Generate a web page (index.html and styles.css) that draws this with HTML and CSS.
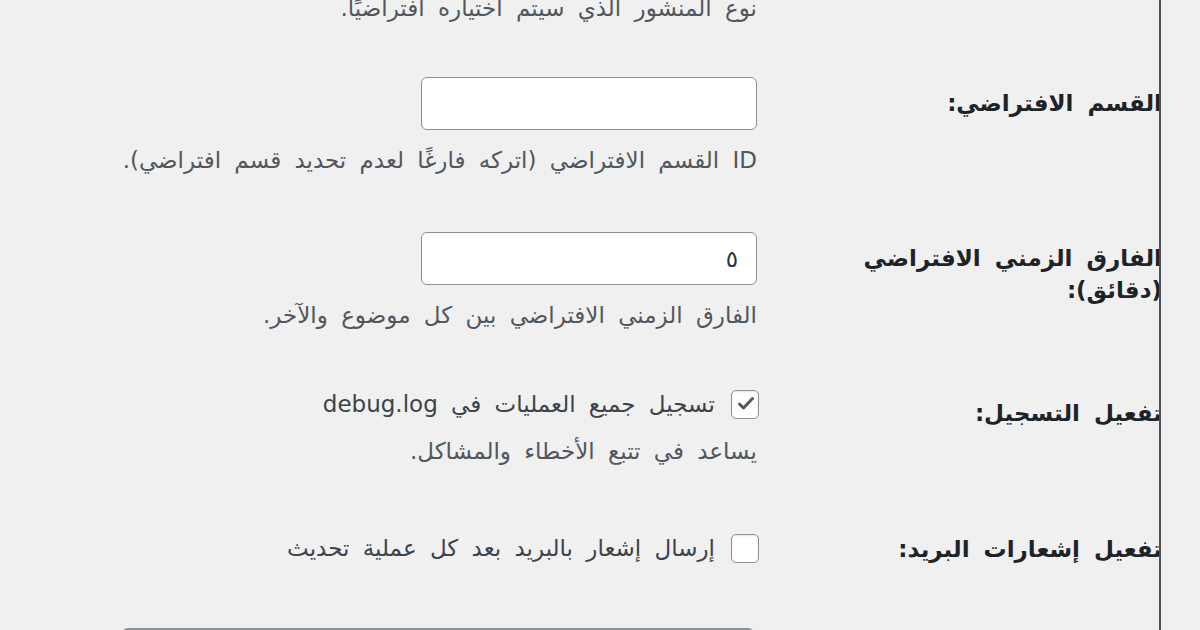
FILE: index.html
```html
<!DOCTYPE html>
<html lang="ar" dir="rtl">
<head>
  <meta charset="UTF-8" />
  <meta name="viewport" content="width=device-width, initial-scale=1.0"/>
  <title>الإعدادات</title>
  <link rel="stylesheet" href="styles.css">
</head>
<body>
  <div class="wrap">

    <!-- post type (tail of the previous row) -->
    <div class="row row-first">
      <div class="label"></div>
      <div class="field">
        <p class="description">نوع المنشور الذي سيتم اختياره افتراضيًا.</p>
      </div>
    </div>

    <!-- default category -->
    <div class="row">
      <label class="label" for="default-cat">القسم الافتراضي:</label>
      <div class="field">
        <input type="text" class="text-input" id="default-cat" value="" />
        <p class="description">ID القسم الافتراضي (اتركه فارغًا لعدم تحديد قسم افتراضي).</p>
      </div>
    </div>

    <!-- default interval -->
    <div class="row">
      <label class="label" for="default-gap">الفارق الزمني الافتراضي (دقائق):</label>
      <div class="field">
        <input type="text" class="text-input" id="default-gap" value="٥" />
        <p class="description">الفارق الزمني الافتراضي بين كل موضوع والآخر.</p>
      </div>
    </div>

    <!-- logging -->
    <div class="row">
      <div class="label">تفعيل التسجيل:</div>
      <div class="field">
        <label class="check-line">
          <span class="checkbox">
            <svg width="28" height="29" viewBox="0 0 28 29"><path d="M7.5 15l4 4L20.5 9.5" fill="none" stroke="#50575e" stroke-width="3" stroke-linecap="round" stroke-linejoin="round"/></svg>
          </span>
          <span>تسجيل جميع العمليات في debug.log</span>
        </label>
        <p class="description">يساعد في تتبع الأخطاء والمشاكل.</p>
      </div>
    </div>

    <!-- mail notifications -->
    <div class="row">
      <div class="label">تفعيل إشعارات البريد:</div>
      <div class="field field-mail">
        <label class="check-line">
          <span class="checkbox"></span>
          <span>إرسال إشعار بالبريد بعد كل عملية تحديث</span>
        </label>
      </div>
    </div>

    <!-- next row, mostly below the fold -->
    <div class="row">
      <div class="label"></div>
      <div class="field field-last">
        <div class="wide-box"></div>
      </div>
    </div>

  </div>
</body>
</html>
```

FILE: styles.css
```css
:root {
  --bg: #f0f0f1;
  --text: #1d2327;
  --muted: #50575e;
  --border: #8c8f94;
}

body {
  margin: 0;
  background-color: var(--bg);
  color: #3c434a;
  font-family: "DejaVu Sans", Tahoma, sans-serif;
  font-size: 23px;
  word-spacing: 6px;
}

.wrap {
  width: 1159px;
  height: 630px;
  margin-left: 0;
  margin-right: auto;
  border-right: 2px solid #4a4f55;
  overflow: hidden;
}

.row {
  display: grid;
  grid-template-columns: 310px 1fr;
  column-gap: 90px;
}

.label {
  padding-top: 39px;
  margin-right: -3px;
  font-size: 23px;
  font-weight: bold;
  line-height: 32px;
  color: var(--text);
}

.field {
  padding: 29px 2px 29px 0;
}

.row-first .label {
  padding-top: 0;
}

.row-first .field {
  padding-top: 0;
  padding-bottom: 26px;
}

.row-first .description {
  margin-top: -6px;
}

.field-mail {
  padding-top: 37px;
}

.field-last {
  padding-top: 34px;
}

.text-input {
  display: block;
  box-sizing: border-box;
  width: 336px;
  height: 53px;
  margin: 0;
  padding: 0 18px;
  border: 1.5px solid var(--border);
  border-radius: 6px;
  background: #fff;
  font-family: inherit;
  font-size: 23px;
  color: #2c3338;
  direction: rtl;
}

.description {
  margin: 16px 0 0;
  line-height: 28px;
  color: var(--muted);
}

.check-line {
  display: flex;
  align-items: center;
  gap: 16px;
  height: 34px;
  line-height: 34px;
}

.checkbox {
  box-sizing: border-box;
  width: 28px;
  height: 29px;
  margin-right: -2px;
  border: 1.5px solid var(--border);
  border-radius: 5px;
  background: #fff;
  box-shadow: inset 0 1px 2px rgba(0,0,0,0.1);
  flex: none;
}

.checkbox svg {
  display: block;
  margin: -1.5px;
}

.wide-box {
  box-sizing: border-box;
  width: 632px;
  height: 53px;
  margin-right: 3px;
  border: 2px solid var(--border);
  border-radius: 6px;
  background: #fff;
}
```
